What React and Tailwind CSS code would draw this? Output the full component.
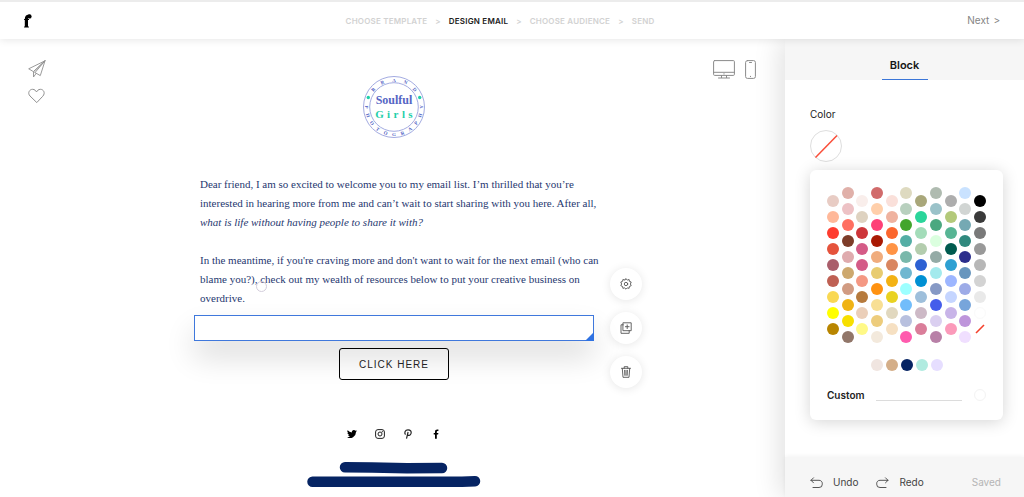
import React from "react";

const PALETTE = [
  ["#e8ccc4", "#ffb899", "#fe3c2f", "#e5533c", "#aa5e6b", "#bf6053", "#f9d853", "#ffff00", "#b88500"],
  ["#e0b0a9", "#edc2c5", "#ff6f61", "#7d3c29", "#dfabae", "#cda86e", "#d19b82", "#f0b314", "#f7df00", "#917669"],
  ["#f9eeeb", "#ded2c0", "#cd3539", "#d45b87", "#d45b87", "#f49883", "#b67a3d", "#ebcfb9", "#fff987"],
  ["#d16b6b", "#ffcfaa", "#fe4077", "#a91903", "#f0ac7d", "#e8cc70", "#ff9210", "#f8df94", "#edcc7c", "#f3e9dc"],
  ["#fae0da", "#efb29f", "#fb662d", "#ff9345", "#d98660", "#f3b214", "#e9d222", "#e1d8bf", "#f6e0c2"],
  ["#dedac0", "#b8d0be", "#42a52c", "#54aea5", "#79b8ab", "#6fb7d0", "#9dffff", "#72bdfb", "#b8c0de", "#ff5bae"],
  ["#a9a77a", "#2ad59a", "#a3dcb9", "#b4cdae", "#2d61d3", "#0090d3", "#9ebfdb", "#cdb9c6", "#da7e9a"],
  ["#afbbb0", "#9ac2c9", "#4aa880", "#dbffdf", "#94aba6", "#a3eaed", "#8699c5", "#455deb", "#dacff0", "#b880a7"],
  ["#adadad", "#b3c97a", "#57b594", "#005b4f", "#2ea0d2", "#9db6ff", "#c5d5ff", "#c8b4e8", "#fb9aba"],
  ["#c9e2ff", "#d1d5d3", "#75a9b3", "#30897e", "#2c2e8c", "#6896be", "#9dabe7", "#77a5db", "#be95db", "#f0dfff"],
  ["#000000", "#3a3a3a", "#797979", "#999999", "#b7b7b7", "#d3d3d3", "#e9e9e9", "#ffffff", "none"],
];
const BRAND_COLORS = ["#f0e5e0", "#d4ae88", "#062463", "#b0ebe0", "#e6deff"];

function Swatch({ color }) {
  if (color === "none") {
    return (
      <button aria-label="No color" className="size-3">
        <svg viewBox="0 0 12 12" className="size-3">
          <path d="M2 10 10 2" stroke="#f4402c" strokeWidth="1.6" />
        </svg>
      </button>
    );
  }
  return (
    <button
      aria-label={color}
      className={"size-3 rounded-full " + (color === "#ffffff" ? "border border-[#fafafa]" : "")}
      style={{ backgroundColor: color }}
    />
  );
}

function BrandMark() {
  return (
    <svg viewBox="0 0 8 14" className="h-[14px] w-2" role="img" aria-label="Home">
      <circle cx="5.4" cy="2.4" r="2.2" />
      <path d="M6.600 1.100C3.400-.2 .8 1.200.8 5H.1v1h.7v6.200l-.7.500v.9h4.800v-.9l-.9-.5V6h1V5H4c0-1.700-.2-2.300.6-2.900z" />
    </svg>
  );
}

function RoundLogo() {
  const cx = 31;
  const top = "BRAND".split("").map((ch, i) => ({ ch, a: -50 + i * 25 }));
  const bottom = "PHOTOGRAPHY".split("").map((ch, i) => ({ ch, a: 90 - i * 18 }));
  return (
    <svg viewBox="0 0 62 62" className="size-[62px]" role="img" aria-label="Soulful Girls">
      <circle cx={cx} cy="31" r="30.5" fill="none" stroke="#a3abe1" strokeWidth="1" />
      <circle cx={cx} cy="31" r="24.300" fill="none" stroke="#a3abe1" strokeWidth="1" />
      <g fill="#4f5fc4" fontFamily="Liberation Serif, serif" fontWeight="700" fontSize="5" textAnchor="middle">
        {top.map(({ ch, a }, i) => (
          <text key={i} x={cx} y="5.500" transform={`rotate(${a} 31 31)`}>{ch}</text>
        ))}
        {bottom.map(({ ch, a }, i) => (
          <text key={i} x={cx} y="60" transform={`rotate(${a} 31 31)`}>{ch}</text>
        ))}
      </g>
      <circle cx="5.300" cy="21.500" r="1.700" fill="#1fcfa9" />
      <circle cx="56.700" cy="21.500" r="1.700" fill="#1fcfa9" />
      <g fontFamily="Liberation Serif, serif" fontSize="12" fontWeight="700" textAnchor="middle">
        <text x={cx} y="28" fill="#5565c4">Soulful</text>
        {"Girls".split("").map((ch, i) => (
          <text key={i} x={[16.500, 25.500, 33, 40.500, 47.500][i]} y="42" fill="#1fcfa9" fontSize="11">{ch}</text>
        ))}
      </g>
    </svg>
  );
}

const stroke = { fill: "none", stroke: "currentColor", strokeLinejoin: "round", strokeLinecap: "round" };

function RoundTool({ label, children }) {
  return (
    <button aria-label={label} className="flex size-8 items-center justify-center rounded-full bg-white text-[#555] shadow-[0_1px_10px_rgba(0,0,0,0.1)]">
      <svg viewBox="0 0 12 12" className="size-3" {...stroke} strokeWidth=".9">{children}</svg>
    </button>
  );
}

const STEPS = ["CHOOSE TEMPLATE", "DESIGN EMAIL", "CHOOSE AUDIENCE", "SEND"];

function Header() {
  return (
    <header className="relative z-20 grid h-[39px] shrink-0 grid-cols-[1fr_auto_1fr] items-center border-t-2 border-[#ececec] bg-white px-6 shadow-[0_1px_8px_rgba(0,0,0,0.1)]">
      <a href="#home" className="w-2"><BrandMark /></a>
      <nav className="mr-6 flex items-center gap-2 text-[8px] font-semibold tracking-wide text-[#d2d2d2]">
        {STEPS.map((s, i) => (
          <React.Fragment key={s}>
            {i > 0 && <span aria-hidden="true">&gt;</span>}
            <a href={"#step" + (i + 1)} className={i === 1 ? "text-[#222]" : ""}>{s}</a>
          </React.Fragment>
        ))}
      </nav>
      <a href="#next" className="flex items-center gap-1 justify-self-end text-[10px] text-[#858585]">
        <span>Next</span><span>&gt;</span>
      </a>
    </header>
  );
}

function Socials() {
  return (
    <div className="mt-[49px] flex gap-[18px]">
      <a href="#twitter" aria-label="Twitter"><svg viewBox="0 0 24 24" className="size-[10px]"><path d="M24 4.600a10 10 0 0 1-2.800.8 5 5 0 0 0 2.100-2.700 10 10 0 0 1-3.100 1.200 4.900 4.900 0 0 0-8.400 4.500A14 14 0 0 1 1.700 3.100a4.900 4.900 0 0 0 1.500 6.600 4.900 4.900 0 0 1-2.200-.6 4.900 4.900 0 0 0 3.900 4.900 5 5 0 0 1-2.200.1 4.900 4.900 0 0 0 4.600 3.400A9.900 9.900 0 0 1 0 19.500 14 14 0 0 0 21.500 7.100 10 10 0 0 0 24 4.600z" /></svg></a>
      <a href="#instagram" aria-label="Instagram"><svg viewBox="0 0 10 10" className="size-[10px]" fill="none" stroke="#222"><rect x=".6" y=".6" width="8.800" height="8.800" rx="2.400" /><circle cx="5" cy="5" r="2" /><circle cx="7.400" cy="2.600" r=".3" /></svg></a>
      <a href="#pinterest" aria-label="Pinterest"><svg viewBox="0 0 10 10" className="size-[10px]" fill="none" stroke="#222" strokeWidth="1.200"><path d="M2.500 5.700C1 3.700 2.100.8 5 .8c2.500 0 3.700 1.800 3 3.800-.7 2-3 2.500-3.500.9M5.100 3 3.500 9.600" /></svg></a>
      <a href="#facebook" aria-label="Facebook"><svg viewBox="0 0 10 10" className="size-[10px]"><path d="M4 9.700V5.600H2.700V4H4V2.900C4 1.300 4.900.5 6.200.5h1.200v1.600h-.8c-.6 0-.8.300-.8.800V4h1.600l-.3 1.600H5.800v4.100z" /></svg></a>
    </div>
  );
}

function Email() {
  return (
    <section className="flex flex-col items-center pt-[37px]">
      <RoundLogo />
      <div className="relative mt-9 w-[406px] self-start pt-px pl-[6px] font-['Liberation_Serif',serif] text-[11px] leading-[19px] text-[#1f3870]">
        <p>
          Dear friend, I am so excited to welcome you to my email list. I’m thrilled that you’re
          interested in hearing more from me and can’t wait to start sharing with you here. After all,
          <br />
          <em>what is life without having people to share it with?</em>
        </p>
        <p className="mt-[19px]">
          In the meantime, if you're craving more and don't want to wait for the next email (who can
          blame you?), check out my wealth of resources below to put your creative business on
          overdrive.
        </p>
        <span className="absolute bottom-4 left-[62px] size-[11px] rounded-full border border-[#d3cddb]" />
      </div>
      <div className="relative mt-[7px] h-[26px] w-full border border-[#3f78dc] bg-white shadow-[0_16px_30px_rgba(0,0,0,0.14)]">
        <svg viewBox="0 0 9 9" className="absolute -right-px -bottom-px size-[9px]"><path d="M9 0v9H0z" fill="#2f72e2" /></svg>
      </div>
      <button className="relative mt-[7px] h-8 w-[110px] rounded-[3px] border border-black font-['Liberation_Sans',sans-serif] text-[10px] tracking-[1px] text-[#222]">CLICK HERE</button>
      <Socials />
      <svg viewBox="0 0 174 26" className="mt-[22px] w-[174px]" fill="none" stroke="#062463" strokeLinecap="round" strokeLinejoin="round" strokeWidth="10.500">
        <path d="M38 6.300 65 6.500 100 7.300 135 7" />
        <path d="M5.500 20.700 155 20.700 168 20.200" />
      </svg>
    </section>
  );
}

function Panel() {
  return (
    <aside className="relative z-10 flex w-[239px] shrink-0 flex-col bg-white shadow-[-4px_0_26px_rgba(0,0,0,0.13)]">
      <div role="tablist" className="flex h-[41px] justify-center bg-[#f6f6f6]">
        <button role="tab" aria-selected="true" className="w-[46px] border-b border-[#3b76d8] pt-3 text-[11px] font-semibold text-[#161616]">Block</button>
      </div>
      <div className="px-[25px] pt-[26px] text-[10px] text-[#222]">
        <div className="leading-4">Color</div>
        <button aria-label="Block color" className="mt-2 block size-8 rounded-full border border-[#dedede]">
          <svg viewBox="0 0 30 30"><path d="M4.500 26.500 26 4.500" stroke="#fa4d38" strokeWidth="1.500" /></svg>
        </button>
        <div className="mt-2 mr-[-4px] rounded-md bg-white px-[17px] pt-[17px] pb-[17px] shadow-[0_2px_16px_rgba(0,0,0,0.17)]">
          <div className="flex items-center justify-between">
            {PALETTE.map((col, i) => (
              <div key={i} className="flex flex-col gap-1">
                {col.map((c, j) => <Swatch key={j} color={c} />)}
              </div>
            ))}
          </div>
          <div className="mt-4 flex justify-center gap-[3px]">
            {BRAND_COLORS.map((c) => <Swatch key={c} color={c} />)}
          </div>
          <div className="mt-4 flex h-4 items-center">
            <label htmlFor="custom" className="w-[49px] font-semibold">Custom</label>
            <input id="custom" type="text" className="h-3 min-w-0 flex-1 border-b border-[#dcdcdc] outline-none" />
            <span className="ml-3 size-3 rounded-full border border-[#f3f3f3]" />
          </div>
        </div>
      </div>
      <footer className="mt-auto flex h-10 items-center bg-[#f6f6f6] px-[25px] pt-[11px] text-[10px] text-[#444] shadow-[0_-1px_4px_rgba(0,0,0,0.05)]">
        <button className="flex items-center gap-[10px]">
          <svg viewBox="0 0 13 12" className="h-3 w-[13px]" {...stroke} strokeWidth=".9"><path d="M3.500.8 1 3.300l2.500 2.500M1 3.300h8a3.200 3.200 0 0 1 3.300 3.500v.4A3.200 3.200 0 0 1 9 10.500H3" /></svg>
          Undo
        </button>
        <button className="ml-[18px] flex items-center gap-[10px]">
          <svg viewBox="0 0 13 12" className="h-3 w-[13px]" {...stroke} strokeWidth=".9"><path d="M9.500.8 12 3.300 9.500 5.800M12 3.300H4A3.200 3.200 0 0 0 .7 6.800v.4A3.200 3.200 0 0 0 4 10.500h6" /></svg>
          Redo
        </button>
        <span className="mr-[-2px] ml-auto text-[#b5b5b5]">Saved</span>
      </footer>
    </aside>
  );
}

export default function App() {
  return (
    <div className="flex min-h-screen flex-col bg-white font-['Inter',sans-serif]">
      <Header />
      <div className="flex flex-1">
        <main className="grid flex-1 grid-cols-[1fr_400px_1fr] pl-[3px]">
          <div className="flex flex-col items-start gap-[10px] pt-[21px] pl-[25px] text-[#909090]">
            <button aria-label="Send a test"><svg viewBox="0 0 18 18" className="size-[18px]" {...stroke} strokeWidth=".9"><path d="M17 .8.700 8.800l4.800 2.900L17 .8 12.300 15.600 7 12.600M17 .8 5.500 11.700v5.300l2.700-3.600M7 12.600 17 .8" /></svg></button>
            <button aria-label="Add to favorites"><svg viewBox="0 0 17 16" className="h-4 w-[17px]" {...stroke}><path d="M8.500 14.300 2 8C-.8 5 1.600 1.300 4.500 1.300 6.800 1.300 7.800 2.800 8.500 4c.7-1.200 1.700-2.700 4-2.700C15.400 1.300 17.800 5 15 8z" /></svg></button>
          </div>
          <Email />
          <div className="flex flex-col">
            <div className="flex items-start justify-end gap-[10px] pt-[21px] pr-[29px] text-[#8b8b8b]">
              <button aria-label="Desktop preview"><svg viewBox="0 0 22 19" className="h-[19px] w-[22px]" {...stroke}><rect x=".6" y=".6" width="20.800" height="14.800" rx="1" /><path d="M.6 12.300h20.800M8.500 15.400v2.200M13.500 15.400v2.200M5.500 18h11M11 13.700v.4" /></svg></button>
              <button aria-label="Mobile preview"><svg viewBox="0 0 11 19" className="h-[19px] w-[11px]" {...stroke}><rect x=".6" y=".6" width="9.800" height="17.800" rx="1.800" /><path d="M4.500 2.500h2M5.500 16.300v.3" /></svg></button>
            </div>
            <div className="mt-[189px] ml-4 flex flex-col gap-3">
              <RoundTool label="Block settings">
                <path d="M6 .8 7.300 2l1.800-.5.300 1.800 1.800.7L10.400 6l.8 1.700-1.800.8-.3 1.800-1.800-.4L6 11.200l-1.300-1.300-1.800.4-.3-1.800-1.800-.8L1.600 6 .8 4l1.800-.7.300-1.800L4.700 2z" /><circle cx="6" cy="6" r="1.700" />
              </RoundTool>
              <RoundTool label="Duplicate block">
                <path d="M3.300.8h7.900v7.900H3.300zM3.300 2.800H1v8.500h8.200V8.700M7.200 2.900v3.700M5.400 4.700h3.700" />
              </RoundTool>
              <RoundTool label="Delete block">
                <path d="M1.500 2.300h9M4.200 2.300V.7h3.600v1.600M2.300 2.500l.7 8.800h6l.7-8.800M4.600 4.300l.2 5M7.400 4.300l-.2 5M6 4.300v5" />
              </RoundTool>
            </div>
          </div>
        </main>
        <Panel />
      </div>
    </div>
  );
}
